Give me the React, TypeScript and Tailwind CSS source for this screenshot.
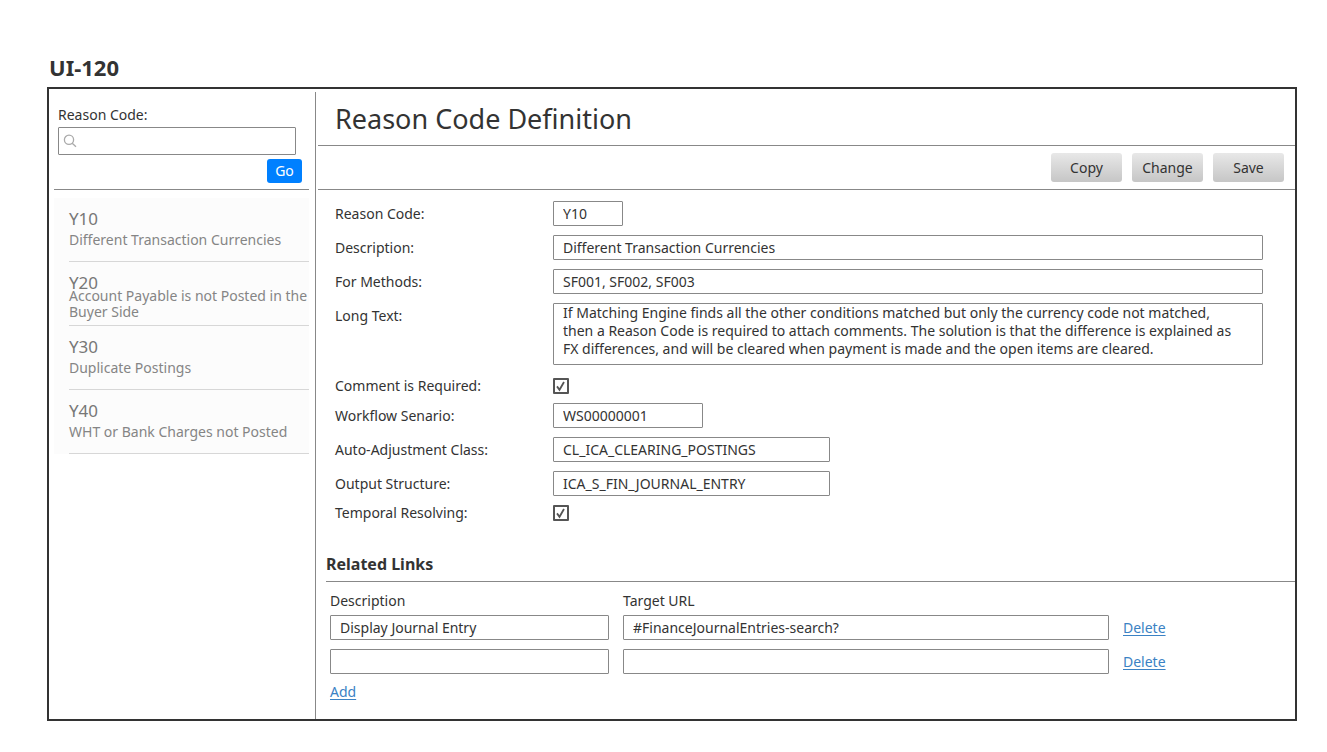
import { useState } from "react";

const reasonCodes = [
  { code: "Y10", text: "Different Transaction Currencies" },
  { code: "Y20", text: "Account Payable is not Posted in the Buyer Side" },
  { code: "Y30", text: "Duplicate Postings" },
  { code: "Y40", text: "WHT or Bank Charges not Posted" },
];

const longText =
  "If Matching Engine finds all the other conditions matched but only the currency code not matched, then a Reason Code is required to attach comments. The solution is that the difference is explained as FX differences, and will be cleared when payment is made and the open items are cleared.";

const box = "block h-[25px] rounded-[1px] border border-[#888] bg-white px-[9px] outline-none";

function TextRow({ id, label, value, width }: { id: string; label: string; value: string; width: string }) {
  return (
    <div className="grid grid-cols-[218px_1fr]">
      <label htmlFor={id} className="leading-[25px]">{label}</label>
      <input id={id} type="text" defaultValue={value} className={`${box} ${width}`} />
    </div>
  );
}

function CheckRow({ id, label }: { id: string; label: string }) {
  return (
    <div className="grid grid-cols-[218px_1fr]">
      <label htmlFor={id} className="leading-4">{label}</label>
      <span className="relative block size-4">
        <input
          id={id}
          type="checkbox"
          defaultChecked
          className="peer block size-4 appearance-none rounded-[1px] border-2 border-[#555] bg-white"
        />
        <svg
          viewBox="0 0 16 16"
          className="pointer-events-none absolute inset-0 hidden size-4 peer-checked:block"
          fill="none"
          stroke="#555"
          strokeWidth="1.8"
        >
          <path d="M4 8.4 6.5 11.8 11 4" />
        </svg>
      </span>
    </div>
  );
}

function ToolbarButton({ children }: { children: string }) {
  return (
    <button
      type="button"
      className="h-[29px] w-[71px] rounded-[3px] bg-linear-to-b from-[#e8e8e8] to-[#c6c6c6] text-center"
    >
      {children}
    </button>
  );
}

function Sidebar() {
  return (
    <aside className="w-[267px] shrink-0 border-r border-[#888] pr-1.5 pl-[5px]">
      <form className="border-b border-[#888] pb-1.5 pl-1" onSubmit={(e) => e.preventDefault()}>
        <label htmlFor="search" className="block pt-[13px] leading-5">Reason Code:</label>
        <div className="relative mt-0.5 mr-[13px]">
          <svg
            viewBox="0 0 14 14"
            className="pointer-events-none absolute top-[7px] left-[5px] size-[14px]"
            fill="none"
            stroke="#aaa"
            strokeWidth="1.3"
          >
            <circle cx="6" cy="5.8" r="4.6" />
            <path d="M9.2 9.2 13 12.8" />
          </svg>
          <input
            id="search"
            type="text"
            className="block h-7 w-full rounded-[1px] border border-[#888] pr-2 pl-6 outline-none"
          />
        </div>
        <div className="flex justify-end pt-1 pr-[7px]">
          <button type="submit" className="h-6 w-[35px] rounded-[3px] bg-[#0080ff] pb-0.5 text-white">Go</button>
        </div>
      </form>
      <ul className="mt-2 bg-[#fcfcfc] pl-[15px] text-[#858585]">
        {reasonCodes.map((item) => (
          <li key={item.code} className="h-16 border-b border-[#d7d7d7]">
            <h3 className="h-[30px] pt-[11px] text-[17px] leading-5 text-[#777]">{item.code}</h3>
            <div className="flex h-6 items-center">
              <p className="leading-4">{item.text}</p>
            </div>
          </li>
        ))}
      </ul>
    </aside>
  );
}

function RelatedLinks() {
  const [links, setLinks] = useState([
    { id: 1, description: "Display Journal Entry", url: "#FinanceJournalEntries-search?" },
    { id: 2, description: "", url: "" },
  ]);
  const linkClass = "text-[#3b82c4] underline underline-offset-2";
  return (
    <section className="pt-8 pl-2">
      <h2 className="border-b border-[#888] pb-1.5 text-[16px] leading-[22px] font-bold">Related Links</h2>
      <table className="ml-1 table-fixed border-collapse text-left">
        <colgroup>
          <col className="w-[293px]" />
          <col className="w-[500px]" />
          <col className="w-[60px]" />
        </colgroup>
        <thead>
          <tr>
            <th className="h-[33px] pt-1 font-normal">Description</th>
            <th className="h-[33px] pt-1 font-normal">Target URL</th>
            <td />
          </tr>
        </thead>
        <tbody>
          {links.map((link) => (
            <tr key={link.id}>
              <td className="pr-[14px] pb-[9px]">
                <input type="text" aria-label="Description" defaultValue={link.description} className={`${box} w-full`} />
              </td>
              <td className="pr-[14px] pb-[9px]">
                <input type="text" aria-label="Target URL" defaultValue={link.url} className={`${box} w-full`} />
              </td>
              <td className="pb-[9px]">
                <a
                  href="#delete"
                  className={linkClass}
                  onClick={(e) => {
                    e.preventDefault();
                    setLinks(links.filter((l) => l.id !== link.id));
                  }}
                >
                  Delete
                </a>
              </td>
            </tr>
          ))}
        </tbody>
      </table>
      <div className="ml-1 leading-[18px]">
        <a
          href="#add"
          className={linkClass}
          onClick={(e) => {
            e.preventDefault();
            setLinks([...links, { id: Date.now(), description: "", url: "" }]);
          }}
        >
          Add
        </a>
      </div>
    </section>
  );
}

export default function App() {
  return (
    <div className="bg-white pt-[54px] pr-[30px] pb-[30px] pl-[47px] font-['Noto_Sans',sans-serif] text-[14px] text-[#333]">
      <h1 className="pl-0.5 text-[22px] leading-[27px] font-bold">UI-120</h1>
      <div className="mt-1.5 flex border-2 border-[#333] pt-[3px]">
        <Sidebar />
        <main className="min-w-0 flex-1 pb-[18px] pl-0.5">
          <h2 className="border-b border-[#888] pt-1.5 pb-[5px] pl-[17px] text-[27px] leading-[42px]">
            Reason Code Definition
          </h2>
          <div className="flex h-11 items-center justify-end gap-[10px] border-b border-[#888] pr-[11px]">
            <ToolbarButton>Copy</ToolbarButton>
            <ToolbarButton>Change</ToolbarButton>
            <ToolbarButton>Save</ToolbarButton>
          </div>
          <form className="pt-[11px] pr-8 pl-[17px]">
            <div className="flex flex-col gap-[9px]">
              <TextRow id="code" label="Reason Code:" value="Y10" width="w-[70px]" />
              <TextRow id="description" label="Description:" value="Different Transaction Currencies" width="w-full" />
              <TextRow id="methods" label="For Methods:" value="SF001, SF002, SF003" width="w-full" />
              <div className="grid grid-cols-[218px_1fr]">
                <label htmlFor="long-text" className="leading-[25px]">Long Text:</label>
                <textarea
                  id="long-text"
                  defaultValue={longText}
                  className="block h-[62px] w-full resize-none overflow-hidden rounded-[1px] border border-[#888] pr-[26px] pl-[9px] leading-[18px] outline-none"
                />
              </div>
            </div>
            <div className="mt-[13px] flex flex-col gap-[9px]">
              <CheckRow id="comment" label="Comment is Required:" />
              <TextRow id="workflow" label="Workflow Senario:" value="WS00000001" width="w-[150px]" />
              <TextRow id="class" label="Auto-Adjustment Class:" value="CL_ICA_CLEARING_POSTINGS" width="w-[277px]" />
              <TextRow id="structure" label="Output Structure:" value="ICA_S_FIN_JOURNAL_ENTRY" width="w-[277px]" />
              <CheckRow id="temporal" label="Temporal Resolving:" />
            </div>
          </form>
          <RelatedLinks />
        </main>
      </div>
    </div>
  );
}
